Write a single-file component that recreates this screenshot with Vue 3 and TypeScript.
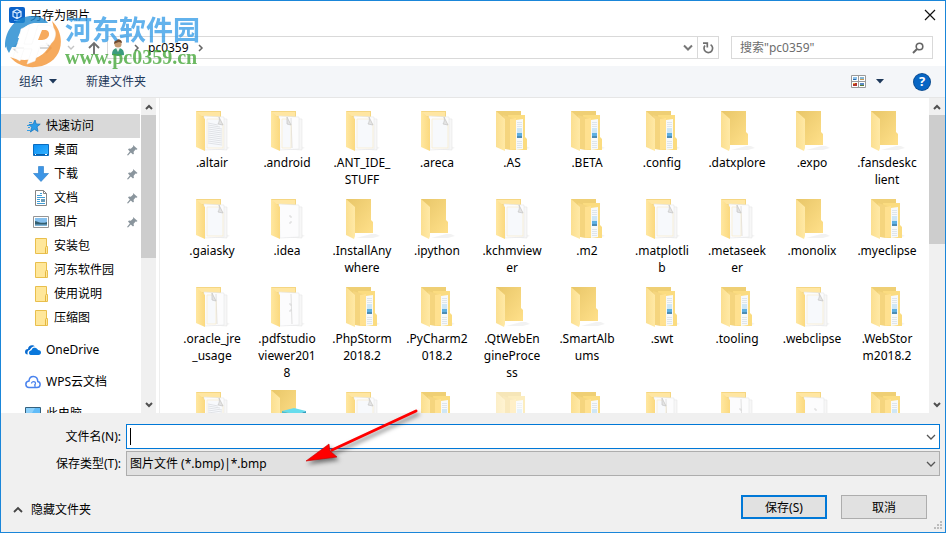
<script setup lang="ts">
import { ref } from 'vue'

type FolderKind = 'empty' | 'page' | 'lined' | 'plain' | 'double' | 'doubleplain' | 'nested' | 'faded' | 'model'
interface FolderItem { name: string; kind: FolderKind }
interface NavItem { name: string; icon: string; level: number; pinned?: boolean; gap?: boolean; active?: boolean }

const fileName = ref('')
const query = ref('')
const fileType = ref('bmp')

const nav: NavItem[] = [
  { name: '快速访问', icon: 'star', level: 0, active: true },
  { name: '桌面', icon: 'desktop', level: 1, pinned: true },
  { name: '下载', icon: 'download', level: 1, pinned: true },
  { name: '文档', icon: 'document', level: 1, pinned: true },
  { name: '图片', icon: 'picture', level: 1, pinned: true },
  { name: '安装包', icon: 'folder', level: 1 },
  { name: '河东软件园', icon: 'folder', level: 1 },
  { name: '使用说明', icon: 'folder', level: 1 },
  { name: '压缩图', icon: 'folder', level: 1 },
  { name: 'OneDrive', icon: 'onedrive', level: 0, gap: true },
  { name: 'WPS云文档', icon: 'cloud', level: 0, gap: true },
  { name: '此电脑', icon: 'pc', level: 0, gap: true },
]

const folders: FolderItem[] = [
  { name: '.altair', kind: 'lined' },
  { name: '.android', kind: 'double' },
  { name: '.ANT_IDE_\nSTUFF', kind: 'page' },
  { name: '.areca', kind: 'page' },
  { name: '.AS', kind: 'nested' },
  { name: '.BETA', kind: 'nested' },
  { name: '.config', kind: 'nested' },
  { name: '.datxplore', kind: 'empty' },
  { name: '.expo', kind: 'empty' },
  { name: '.fansdeskc\nlient', kind: 'empty' },
  { name: '.gaiasky', kind: 'page' },
  { name: '.idea', kind: 'plain' },
  { name: '.InstallAny\nwhere', kind: 'empty' },
  { name: '.ipython', kind: 'empty' },
  { name: '.kchmview\ner', kind: 'page' },
  { name: '.m2', kind: 'nested' },
  { name: '.matplotli\nb', kind: 'page' },
  { name: '.metaseek\ner', kind: 'double' },
  { name: '.monolix', kind: 'empty' },
  { name: '.myeclipse', kind: 'nested' },
  { name: '.oracle_jre\n_usage', kind: 'double' },
  { name: '.pdfstudio\nviewer201\n8', kind: 'doubleplain' },
  { name: '.PhpStorm\n2018.2', kind: 'nested' },
  { name: '.PyCharm2\n018.2', kind: 'nested' },
  { name: '.QtWebEn\ngineProce\nss', kind: 'empty' },
  { name: '.SmartAlb\nums', kind: 'empty' },
  { name: '.swt', kind: 'nested' },
  { name: '.tooling', kind: 'nested' },
  { name: '.webclipse', kind: 'page' },
  { name: '.WebStor\nm2018.2', kind: 'nested' },
  { name: '', kind: 'lined' },
  { name: '', kind: 'model' },
  { name: '', kind: 'page' },
  { name: '', kind: 'nested' },
  { name: '', kind: 'faded' },
  { name: '', kind: 'nested' },
  { name: '', kind: 'double' },
  { name: '', kind: 'doubleplain' },
  { name: '', kind: 'plain' },
  { name: '', kind: 'nested' },
]

const isDouble = (k: FolderKind) => k === 'double' || k === 'doubleplain'
const isNested = (k: FolderKind) => k === 'nested' || k === 'faded'
const hasPage = (k: FolderKind) => ['page', 'lined', 'plain', 'double', 'doubleplain'].includes(k)
const hasFold = (k: FolderKind) => ['page', 'lined', 'double'].includes(k)
</script>

<template>
  <div class="dialog">
    <svg class="defs" width="0" height="0" aria-hidden="true">
      <defs>
        <linearGradient id="flap" x1="0" x2="1"><stop offset="0" stop-color="#ffe7a0" /><stop offset="1" stop-color="#fbd97f" /></linearGradient>
        <linearGradient id="flap-light" x1="0" x2="1"><stop offset="0" stop-color="#fbdf90" /><stop offset="1" stop-color="#ffe9a6" /></linearGradient>
        <linearGradient id="back" x1="0" y1="0" x2="1" y2="1"><stop offset="0" stop-color="#e8c668" /><stop offset="1" stop-color="#ffe08a" /></linearGradient>
        <linearGradient id="screen" x1="0" y1="0" x2="1" y2="1"><stop offset="0" stop-color="#0a8ff5" /><stop offset="1" stop-color="#38b4ff" /></linearGradient>
      </defs>
    </svg>

    <header class="titlebar">
      <svg class="app-icon" width="16" height="16" viewBox="0 0 16 16">
        <rect width="16" height="16" rx="2" fill="#0b62c9" />
        <path d="M4 4.500 8 2.500l4 2v5l-4 2-4-2zM4 4.500l4 1.800 4-1.800M8 6.300v5" fill="none" stroke="#d9ecff" stroke-width="1.200" />
        <path d="M5 13.500h6" stroke="#58a5ef" />
      </svg>
      <span class="title">另存为图片</span>
      <button class="close" aria-label="关闭">
        <svg width="12" height="12" viewBox="0 0 12 12"><path d="M1 1l10 10M11 1 1 11" stroke="#111" stroke-width="1.200" /></svg>
      </button>
    </header>

    <div class="address-row">
      <div class="history">
        <button aria-label="返回"><svg width="14" height="14" viewBox="0 0 14 14"><path d="M13 7H2M7 2 2 7l5 5" fill="none" stroke="#ccc" stroke-width="1.500" /></svg></button>
        <button aria-label="前进"><svg width="14" height="14" viewBox="0 0 14 14"><path d="M1 7h11M7 2l5 5-5 5" fill="none" stroke="#ccc" stroke-width="1.500" /></svg></button>
        <button aria-label="最近位置" class="recent"><svg width="8" height="6" viewBox="0 0 8 6"><path d="m1 1 3 3 3-3" fill="none" stroke="#c4c4c4" stroke-width="1.400" /></svg></button>
        <button aria-label="向上"><svg width="14" height="14" viewBox="0 0 14 14"><path d="M7 13V2M2 7l5-5 5 5" fill="none" stroke="#707070" stroke-width="1.900" /></svg></button>
      </div>
      <div class="address">
        <svg class="user" width="14" height="18" viewBox="0 0 14 18">
          <path d="M1 16c0-5 2-7 6-7s6 2 6 7l-6 1z" fill="#3b9b7d" />
          <path d="m5 9 2 4 2-4z" fill="#e8f4ec" />
          <circle cx="7" cy="5" r="3.600" fill="#c49a70" />
          <path d="M3 5c0-6 8-6 8-1L8 3 5 4z" fill="#6a4a30" />
        </svg>
        <svg class="crumb" width="6" height="8" viewBox="0 0 6 8"><path d="m1 1 3 3-3 3" fill="none" stroke="#666" stroke-width="1.500" /></svg>
        <span>pc0359</span>
        <svg class="crumb" width="6" height="8" viewBox="0 0 6 8"><path d="m1 1 3 3-3 3" fill="none" stroke="#666" stroke-width="1.500" /></svg>
        <button class="addr-drop" aria-label="以前的位置"><svg width="10" height="8" viewBox="0 0 10 8"><path d="m1 1.500 4 4 4-4" fill="none" stroke="#777" stroke-width="2" /></svg></button>
        <button class="refresh" aria-label="刷新">
          <svg width="12" height="12" viewBox="0 0 12 12"><path d="M8.600 2.600A4.300 4.300 0 1 1 3 3.500" fill="none" stroke="#707070" stroke-width="1.700" /><path d="M1 1.200h4.300v4.200" fill="none" stroke="#707070" stroke-width="1.700" /></svg>
        </button>
      </div>
      <label class="search">
        <input v-model="query" type="text" placeholder="搜索&quot;pc0359&quot;" aria-label="搜索" />
        <svg width="12" height="12" viewBox="0 0 12 12"><circle cx="7.500" cy="4.500" r="3.300" fill="none" stroke="#666" stroke-width="1.600" /><path d="m5 7-4 4" stroke="#666" stroke-width="2" /></svg>
      </label>
    </div>

    <div class="toolbar">
      <button class="organize">组织<svg width="8" height="5" viewBox="0 0 8 5"><path d="M0 0h8L4 4.500z" fill="#1e395b" /></svg></button>
      <button>新建文件夹</button>
      <button class="view" aria-label="更改视图">
        <svg width="15" height="13" viewBox="0 0 15 13">
          <path d="M.5.5h14v12H.5zM7.500.5v12M.5 6.500h14" fill="#fff" stroke="#9a9a9a" />
          <path d="M2 2h4v3H2z" fill="#8ec1e8" /><path d="M2 4h3v1H2z" fill="#2a6bb0" />
          <path d="M9 2h4v3H9z" fill="#85b7d5" /><path d="M9 4h4v1H9z" fill="#c79a55" />
          <path d="M2 8h4v3H2z" fill="#b3342b" /><path d="M2 8h2v1H2z" fill="#e8a53c" />
          <path d="M9 8h4v3H9z" fill="#5c8cc4" /><path d="M9 10h4v1H9z" fill="#577c35" />
        </svg>
        <svg width="8" height="5" viewBox="0 0 8 5"><path d="M0 0h8L4 4.500z" fill="#1e395b" /></svg>
      </button>
      <button class="help" aria-label="帮助">?</button>
    </div>

    <main class="body">
      <nav class="sidebar">
        <a v-for="n in nav" :key="n.name" href="#" :class="['nav', 'level' + n.level, { active: n.active, gap: n.gap }]">
          <svg width="16" height="16" viewBox="0 0 16 16">
            <template v-if="n.icon === 'star'">
              <path d="m10 2 1.200 4 4 .2-3.200 2.600 1 4.700-3.600-2.200-4 2.700 1.300-4.700L4 6.600l4-.4z" fill="#2b9ce8" stroke="#1779c4" stroke-width=".8" />
              <path d="M4 4.500h3M2 7.500h3M3 9.500h2M2 12.500h3" stroke="#3a9ee2" />
            </template>
            <template v-else-if="n.icon === 'desktop'">
              <path d="M.5 2.500h15v11H.5z" fill="url(#screen)" stroke="#0b6cbf" /><path d="M1 12.500h14" stroke="#0a5ea8" /><path d="M2 12.500h1m9 0h2" stroke="#fff" />
            </template>
            <path v-else-if="n.icon === 'download'" d="M5.500.5h5v7h5L8 15.500.5 7.500h5z" fill="#3d95e5" stroke="#2479c7" stroke-width=".6" />
            <template v-else-if="n.icon === 'document'">
              <path d="M2.500.5h8l3 3v12h-11z" fill="#fff" stroke="#858585" /><path d="M10.500.5v3h3" fill="none" stroke="#858585" />
              <path d="M7 3.500h2m-5 2h5m-5 2h8m-8 2h3m2 0h3m-8 2h3m-3 2h8" stroke="#3f9ed8" /><path d="M8 9h4v3H8z" fill="#6b9cb8" />
            </template>
            <template v-else-if="n.icon === 'picture'">
              <path d="M.5 2.500h15v11H.5z" fill="#fff" stroke="#959595" /><path d="M2 4h12v8H2z" fill="#86c0ee" /><path d="M2 7c4 1 7 3 12 1v4H2z" fill="#345f70" /><path d="M2 10.500h12V12H2z" fill="#7eb4d8" />
            </template>
            <template v-else-if="n.icon === 'folder'">
              <path d="M2.500.5h11v8h1v7h-12z" fill="#ffe79a" stroke="#e9bf4c" /><path d="M12.500 15.500V9.500l1-1.500" fill="none" stroke="#e4b740" />
            </template>
            <template v-else-if="n.icon === 'onedrive'">
              <path d="M0 10c0-2 1-3 3-3 0-4 5-5 7-2.500C8 4 5.500 6 5 8c-2 0-3 2-2.300 4.500C1 12.500 0 11.500 0 10z" fill="#0a6cd0" />
              <path d="M4 11c0-2 1-2.800 2.500-2.800C7 4.500 12 4.500 13 8c2 0 3 1 3 2.600 0 1.500-1 2.400-2.500 2.400h-7C5 13 4 12.500 4 11z" fill="#0a78dc" />
              <path d="M3.500 10.500C3.500 8.500 5 8 6 7.800 7 4.500 11 4 12.800 7" fill="none" stroke="#fff" stroke-width=".8" />
            </template>
            <template v-else-if="n.icon === 'cloud'">
              <path d="M4 13.500h8c4 0 4-5.500.8-6C12.500 1 4.500 1 4 7-.5 7.500.2 13.500 4 13.500z" fill="#fff" stroke="#4a83ee" stroke-width="1.500" />
              <path d="M6.500 9.500c0-2.500 4-2.500 4 0 0 1.500-1 1.500-1.500 1.500M10 11v2" fill="none" stroke="#4a83ee" stroke-width="1.200" />
            </template>
            <template v-else>
              <path d="M.5 1.500h15v11H.5z" fill="#61bcf8" stroke="#34617e" /><path d="M1 2h9L4 12H1z" fill="#8bd0fb" />
            </template>
          </svg>
          <span>{{ n.name }}</span>
          <svg v-if="n.pinned" class="pin" width="11" height="12" viewBox="0 0 11 12"><path d="m6 1 4.500 4-1 .8-1-.2L6.500 8 7 9.500 6 10.500 3.800 8.400 1 11.500 0 11l2.800-3.500L1 5.500l1-1 1.800.2L6.200 2.500z" fill="#8a959d" /></svg>
        </a>
      </nav>
      <div class="scrollbar side">
        <button aria-label="向上滚动"><svg width="8" height="6" viewBox="0 0 8 6"><path d="m1 5 3-3 3 3" fill="none" stroke="#505050" stroke-width="2" /></svg></button>
        <div class="track"><div class="thumb"></div></div>
        <button aria-label="向下滚动"><svg width="8" height="6" viewBox="0 0 8 6"><path d="m1 1 3 3 3-3" fill="none" stroke="#505050" stroke-width="2" /></svg></button>
      </div>

      <section class="files">
        <div v-for="(f, i) in folders" :key="i" class="file">
          <svg width="48" height="48" viewBox="0 0 48 48" :class="{ faded: f.kind === 'faded' }">
            <path d="M33 40h5l4 2-7 2H18z" fill="#000" opacity=".05" />
            <template v-if="f.kind === 'empty'">
              <path d="M8 5h25v21l2 2v11H17L8 30z" fill="url(#back)" />
              <path d="M8 5l9 8v29l-1 3-8-4z" fill="url(#flap-light)" />
            </template>
            <template v-else-if="f.kind === 'model'">
              <path d="M8 3h25v37H8z" fill="url(#back)" />
              <path d="M8 3l9 8v34l-9-4z" fill="url(#flap-light)" />
              <path d="m19 24 12-3 12 3-10 4z" fill="#66dced" /><path d="m19 24 14 4v14l-14-4z" fill="#44bed6" /><path d="m33 28 10-4v14l-10 4z" fill="#2d9fc0" />
            </template>
            <template v-else-if="isNested(f.kind)">
              <path d="M8 5h25v34H8z" fill="#efcf74" />
              <path d="M20 9h17v22l2 2v11H24z" fill="#fbdc80" />
              <path d="m28 14 7-1v30l-7 1z" fill="#f7f9fa" />
              <path d="M29 16.500h5m-5 2h5m-5 2h5m-5 15h5m-5 2h5m-5 2h5m-5 2h5" stroke="#d3dde4" stroke-width=".7" />
              <path d="M29 22h5v5h-5z" fill="#cfe7f6" /><path d="M29 27h5v3h-5z" fill="#5fb0e2" /><path d="M29 30h5v2h-5z" fill="#4c8cb4" />
              <path d="m15 9 13 4v30l-5 1-6-1z" fill="#f5d57e" />
              <path d="m22 13 6-1v31l-6 1z" fill="#ffe190" />
              <path d="M8 5l9 8v32l-9-4z" fill="url(#flap-light)" />
            </template>
            <template v-else-if="hasPage(f.kind)">
              <path d="M8 5h25v20H8z" fill="#f5d682" />
              <path d="M9 6h23v4H9z" fill="#ffe6a2" />
              <path d="m23 12 16 1v31l-14-1z" fill="#f7f7f7" stroke="#e6e6e6" stroke-width=".6" />
              <path d="m16 10 20 1v32l-19 1z" fill="#fcfcfd" stroke="#e6e7e9" stroke-width=".6" />
              <path v-if="isDouble(f.kind)" d="m28 12 1 30" stroke="#e0e0e0" />
              <path v-if="hasFold(f.kind)" :d="isDouble(f.kind) ? 'M19 13h5l4 6v23h-9z' : 'M19 13h12l4 6v23H19z'" fill="#f7f9fc" stroke="#f8ebca" stroke-width=".7" />
              <path v-if="hasFold(f.kind)" :d="isDouble(f.kind) ? 'm24 11 4 8-4-1z' : 'm31 11 4 8-5-1c1-2 2-4 1-7z'" fill="#e4e4e4" stroke="#c4c4c4" stroke-width=".7" />
              <path v-if="f.kind === 'lined'" d="m20 17 10 2m-10 0 12 2m-12 0 14 2m-14 0 14 2m-14 0 14 2m-14 0 14 2m-14 0 14 2m-14 0 14 2m-14 0 14 2m-14 0 14 2m-14 0 14 2" stroke="#d6d9dc" stroke-width=".7" />
              <path v-if="!hasFold(f.kind)" d="M26 22h2v2m0 3v2h-2" fill="none" stroke="#d8d8d8" />
              <path d="M8 5l9 8v32l-9-4z" fill="url(#flap)" />
            </template>
          </svg>
          <span>{{ f.name }}</span>
        </div>
      </section>
      <div class="scrollbar main">
        <button aria-label="向上滚动"><svg width="8" height="6" viewBox="0 0 8 6"><path d="m1 5 3-3 3 3" fill="none" stroke="#505050" stroke-width="2" /></svg></button>
        <div class="track"><div class="thumb"></div></div>
        <button aria-label="向下滚动"><svg width="8" height="6" viewBox="0 0 8 6"><path d="m1 1 3 3 3-3" fill="none" stroke="#505050" stroke-width="2" /></svg></button>
      </div>
    </main>

    <footer class="footer">
      <div class="field">
        <label for="file-name">文件名(N):</label>
        <div class="combo name">
          <input id="file-name" v-model="fileName" type="text" />
          <i class="caret"></i>
          <svg width="10" height="6" viewBox="0 0 10 6"><path d="m1 1 4 4 4-4" fill="none" stroke="#555" stroke-width="1.300" /></svg>
        </div>
      </div>
      <div class="field">
        <label for="file-type">保存类型(T):</label>
        <div class="combo type">
          <select id="file-type" v-model="fileType"><option value="bmp">图片文件 (*.bmp)|*.bmp</option></select>
          <svg width="10" height="6" viewBox="0 0 10 6"><path d="m1 1 4 4 4-4" fill="none" stroke="#555" stroke-width="1.300" /></svg>
        </div>
      </div>
      <div class="actions">
        <button class="hide"><svg width="10" height="7" viewBox="0 0 10 7"><path d="m1 6 4-4 4 4" fill="none" stroke="#444" stroke-width="1.800" /></svg>隐藏文件夹</button>
        <button class="push primary">保存(S)</button>
        <button class="push">取消</button>
      </div>
      <svg class="grip" width="8" height="8" viewBox="0 0 8 8"><path d="M6 0h2v2H6zM3 3h2v2H3zM6 3h2v2H6zM0 6h2v2H0zM3 6h2v2H3zM6 6h2v2H6z" fill="#bcbcbc" /></svg>
    </footer>

    <div class="watermark">
      <svg width="58" height="58" viewBox="0 0 58 58">
        <path d="M1 30C3 12 16 2 30 3c6 0 11 3 14 7H30c-9 1-15 9-17 18-4 1-9 3-12 7z" fill="#1e88cf" />
        <path d="M48 8c14 13 12 39-10 45-13 3-24 0-32-9 12 5 26 4 35-5 9-9 11-19 7-31z" fill="#f49535" />
        <path d="m17 16 9-4-6 19h8l6-19h9c9 1 10 9 7 15-3 5-8 6-14 6l-5 15-8 3 5-15h-8l-4 12-7-4 3-8H6c3-3 7-4 8-6z" fill="#fff" stroke="#f3f3f3" stroke-width=".5" />
        <path d="M2 31c3-4 7-6 13-6l-3 9H8l-3 6c-2-3-3-6-3-9z" fill="#1e88cf" />
        <path d="M38 17h4c5 1 4 10-4 10h-4z" fill="#f49535" />
      </svg>
      <div class="wm-text"><strong>河东软件园</strong><b>www.pc0359.cn</b></div>
    </div>

    <svg class="pointer" width="130" height="70" viewBox="0 0 130 70">
      <path d="m115 10-84 39" stroke="#f00" stroke-width="3" stroke-linecap="round" />
      <path d="m5 60 23-17 1 7 7 6z" fill="#f00" stroke="#c40000" stroke-width=".6" />
    </svg>
  </div>
</template>

<style>
body { margin: 0; }
html, body, #app { height: 100%; }
</style>

<style scoped>
.dialog, .dialog * { box-sizing: border-box; }
.dialog {
  position: relative; display: flex; flex-direction: column; height: 100%; overflow: hidden;
  border: 1px solid #1a86d9; background: #fff; color: #000;
  font: 12px/17px "Noto Sans", "Noto Sans CJK SC", sans-serif;
}
button { border: 0; padding: 0; background: none; font: inherit; color: inherit; display: flex; align-items: center; justify-content: center; }
input, select { font: inherit; color: inherit; border: 0; outline: 0; padding: 0; margin: 0; background: none; min-width: 0; }
svg { flex: none; display: block; }
.defs { position: absolute; }
.titlebar { display: flex; align-items: center; height: 28px; padding: 0 9px 0 8px; gap: 5px; }
.close { margin-left: auto; }

.address-row { display: flex; align-items: center; height: 37px; padding: 0 12px 0 10px; }
.history { display: flex; align-items: center; gap: 14px; width: 96px; }
.history .recent { margin-right: -2px; }
.address { display: flex; align-items: center; flex: 1; height: 23px; border: 1px solid #d9d9d9; padding-left: 3px; }
.crumb { margin: 0 8px 0 9px; }
.addr-drop { margin-left: auto; width: 18px; }
.refresh { width: 21px; height: 21px; border-left: 1px solid #d9d9d9; }
.search { display: flex; align-items: center; width: 202px; height: 23px; margin-left: 12px; padding: 0 8px; border: 1px solid #d9d9d9; }
.search input { flex: 1; }
.search input::placeholder { color: #6d6d6d; opacity: 1; }

.toolbar { display: flex; align-items: center; height: 32px; padding: 0 15px 0 18px; background: #f4f6f9; border-bottom: 1px solid #e6e6e6; color: #1e395b; }
.organize { gap: 6px; margin-right: 29px; }
.view { gap: 10px; margin-left: auto; }
.help { width: 16px; height: 16px; margin-left: 30px; border-radius: 50%; background: #0866c4; box-shadow: 0 0 0 1px #0c4d92; color: #fff; font-weight: 700; font-size: 13px; }

.body { display: flex; flex: 1; min-height: 0; }
.sidebar { width: 140px; overflow: hidden; padding-top: 16px; }
.nav { display: flex; align-items: center; gap: 5px; height: 24px; margin-right: 1px; padding-right: 2px; color: inherit; text-decoration: none; white-space: nowrap; }
.nav span { padding-bottom: 2px; }
.level0 { padding-left: 24px; }
.level1 { padding-left: 32px; }
.gap { margin-top: 8px; }
.active { background: #d9d9d9; }
.pin { margin-left: auto; }
.scrollbar { display: flex; flex-direction: column; width: 16px; background: #f0f0f0; }
.scrollbar button { height: 17px; }
.scrollbar .track { flex: 1; }
.thumb { background: #cdcdcd; height: 46%; }
.side .thumb { height: 51%; }
.side { border-right: 1px solid #fff; }
.files {
  flex: 1; min-width: 0; overflow: hidden; margin-left: 2px; padding: 8px 0 0 15px; border-left: 1px solid #eee;
  display: grid; grid-template-columns: repeat(auto-fill, 74px); grid-auto-rows: max-content; gap: 6px 1px;
}
.file { display: flex; flex-direction: column; align-items: center; text-align: center; }
.file span { min-height: 34px; white-space: pre; }
.faded { opacity: 0.5; }

.footer { position: relative; background: #f0f0f0; padding: 11px 5px 13px 0; }
.field { display: flex; align-items: center; margin-bottom: 2px; }
.field label { width: 120px; text-align: right; margin-right: 5px; }
.combo { position: relative; display: flex; align-items: center; flex: 1; height: 25px; border: 1px solid #0078d7; background: #fff; }
.combo input, .combo select { flex: 1; height: 23px; padding-left: 3px; appearance: none; border-radius: 0; }
.combo svg { position: absolute; right: 3px; pointer-events: none; }
.combo.type { background: #e1e1e1; border-color: #adadad; }
.caret { position: absolute; left: 3px; top: 3px; width: 1px; height: 17px; background: #000; }
.actions { display: flex; align-items: center; padding: 17px 13px 0 12px; gap: 14px; }
.hide { gap: 8px; margin-right: auto; padding-top: 4px; }
.push { width: 86px; height: 24px; background: #e1e1e1; border: 1px solid #adadad; }
.primary { border: 2px solid #0078d7; }
.grip { position: absolute; right: 3px; bottom: 3px; }

.watermark { position: absolute; left: 3px; top: 12px; display: flex; opacity: 0.8; pointer-events: none; }
.wm-text { display: flex; flex-direction: column; margin-left: 3px; }
.wm-text strong { font: 700 27px/32px "Noto Sans CJK SC", sans-serif; color: #3b9fe8; }
.wm-text b { font: 700 20px/24px "Liberation Serif", serif; color: #48a83c; }
.pointer { position: absolute; left: 300px; top: 400px; pointer-events: none; filter: drop-shadow(2px 3px 2px rgba(0, 0, 0, 0.5)); }
</style>
